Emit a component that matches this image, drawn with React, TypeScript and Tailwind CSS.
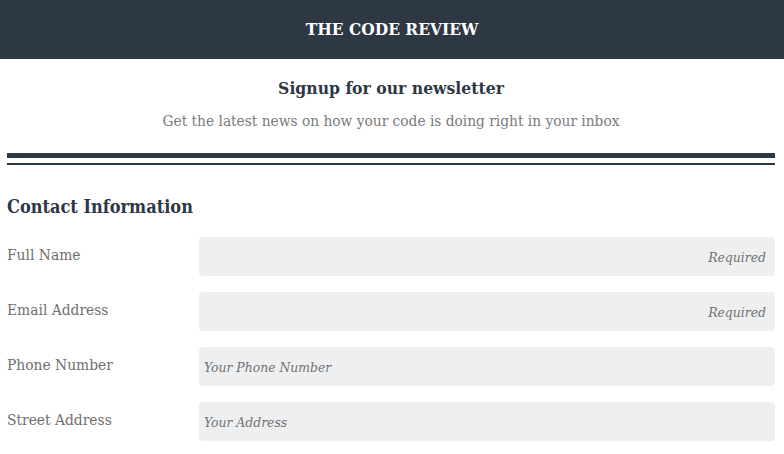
const serif = { fontFamily: '"DejaVu Serif", "Liberation Serif", serif' };

interface FieldProps {
  label: string;
  placeholder: string;
  required?: boolean;
}

function Field({ label, placeholder, required }: FieldProps) {
  return (
    <div className="flex items-start mb-4">
      <label className="w-[192px] shrink-0 pt-[6px] text-[15.4px] leading-6 text-[#6f6f6f] font-stretch-condensed">{label}</label>
      <input
        type="text"
        placeholder={placeholder}
        className={`flex-1 h-[39px] rounded-[4px] bg-[#eeeff1] text-[13.8px] italic font-stretch-condensed text-[#555] placeholder:text-[#727272] outline-none ${
          required ? 'text-right pr-[9px]' : 'text-left pl-[5px]'
        }`}
        style={serif}
      />
    </div>
  );
}

export default function App() {
  return (
    <div className="min-h-screen bg-white font-stretch-condensed" style={serif}>
      {/* Top bar */}
      <header className="h-[59px] bg-[#2e3744] flex items-center justify-center">
        <h1 className="text-[17.2px] font-bold text-white">THE CODE REVIEW</h1>
      </header>

      <div className="pl-[7px] pr-[9px] pb-4">
        {/* Intro */}
        <div className="text-center pt-[17px]">
          <h2 className="text-[17.4px] font-bold leading-6 text-[#2e3744]">Signup for our newsletter</h2>
          <p className="mt-[9px] text-[15.3px] leading-6 text-[#7a7a7a]">
            Get the latest news on how your code is doing right in your inbox
          </p>
        </div>

        {/* Double rule */}
        <div className="mt-[20px] h-[5px] bg-[#2e3744]" />
        <div className="mt-[5px] h-[2px] bg-[#2e3744]" />

        {/* Form */}
        <h3 className="mt-[30px] mb-[18px] text-[18px] font-bold leading-6 text-[#2e3744]">Contact Information</h3>
        <Field label="Full Name" placeholder="Required" required />
        <Field label="Email Address" placeholder="Required" required />
        <Field label="Phone Number" placeholder="Your Phone Number" />
        <Field label="Street Address" placeholder="Your Address" />
      </div>
    </div>
  );
}
